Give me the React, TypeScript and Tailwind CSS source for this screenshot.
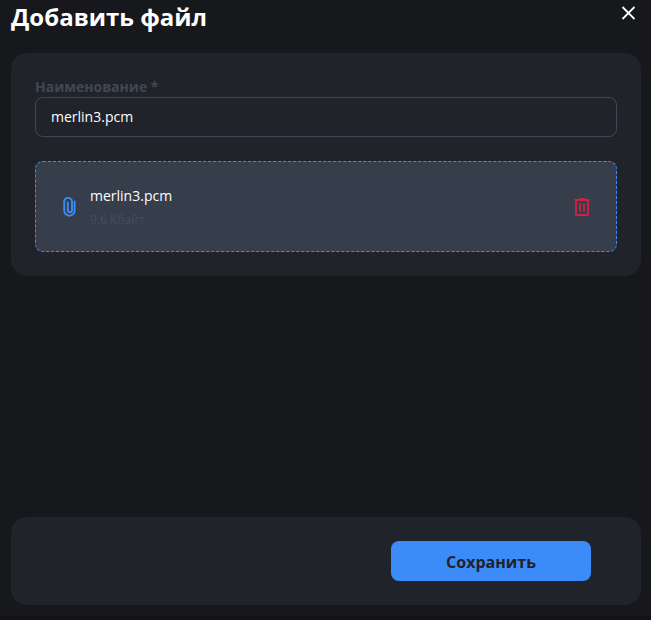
import { useState } from "react";

function CloseIcon() {
  return (
    <svg width="14" height="14" viewBox="0 0 14 14" fill="none" aria-hidden="true">
      <path d="M1.5 1l12 12M13.5 1l-12 12" stroke="currentColor" strokeWidth="1.8" />
    </svg>
  );
}

function ClipIcon() {
  return (
    <svg width="20" height="24" viewBox="0 0 20 24" fill="none" aria-hidden="true">
      <path
        d="M14.6 6.5v9a5.2 5.2 0 0 1-10.4 0V6.8a3.9 3.9 0 0 1 7.8 0v8.4a2.1 2.1 0 0 1-4.2 0V7.5"
        stroke="currentColor"
        strokeWidth="1.9"
        strokeLinecap="round"
      />
    </svg>
  );
}

function TrashIcon() {
  return (
    <svg width="24" height="24" viewBox="0 0 24 24" fill="none" aria-hidden="true">
      <path
        d="M4.5 5h15M9 4h6M6 5v14.2c0 .5.3.8.8.8h10.4c.5 0 .8-.3.8-.8V5M10 8.5v8M14 8.5v8"
        stroke="currentColor"
        strokeWidth="1.9"
      />
    </svg>
  );
}

export default function App() {
  const [name, setName] = useState("merlin3.pcm");
  const [file, setFile] = useState<{ name: string; size: string } | null>({
    name: "merlin3.pcm",
    size: "9.6 Кбайт",
  });

  return (
    <div className="min-h-screen flex flex-col bg-[#17181c] border-b-4 border-[#131217] pl-[11px] pr-2.5 font-['Open_Sans',sans-serif] text-white">
      <header className="flex items-start justify-between mb-[19px]">
        <h1 className="text-2xl leading-[34px] font-bold">Добавить файл</h1>
        <button type="button" aria-label="Закрыть" className="p-1.5">
          <CloseIcon />
        </button>
      </header>

      <form
        className="flex-1 flex flex-col"
        onSubmit={(e) => e.preventDefault()}
      >
        <div className="rounded-2xl bg-[#20232a] p-6">
          <label
            htmlFor="name"
            className="block text-sm font-bold text-[#414854]"
          >
            Наименование *
          </label>
          <input
            id="name"
            type="text"
            value={name}
            onChange={(e) => setName(e.target.value)}
            className="block w-full h-10 px-[15px] pb-0.5 rounded-lg border border-[#414854] text-sm focus:outline-none"
          />

          {file && (
            <div className="mt-6 h-[91px] px-6 flex items-center rounded-lg border border-dashed border-[#3b8cf8] bg-[#363e4b]">
              <span className="text-[#3b8cf8]">
                <ClipIcon />
              </span>
              <div className="ml-2.5 pt-0.5 flex-1">
                <p className="text-sm leading-6">{file.name}</p>
                <p className="text-xs leading-6 text-[#454d5a]">{file.size}</p>
              </div>
              <button
                type="button"
                aria-label="Удалить файл"
                onClick={() => setFile(null)}
                className="-mr-0.5 text-[#cb2346]"
              >
                <TrashIcon />
              </button>
            </div>
          )}
        </div>

        <footer className="mt-auto mb-[11px] flex justify-end rounded-2xl bg-[#20232a] py-6 pr-[50px]">
          <button
            type="submit"
            className="w-[200px] h-10 pt-0.5 rounded-lg bg-[#3b8cf8] text-base font-bold text-[#20232a]"
          >
            Сохранить
          </button>
        </footer>
      </form>
    </div>
  );
}
